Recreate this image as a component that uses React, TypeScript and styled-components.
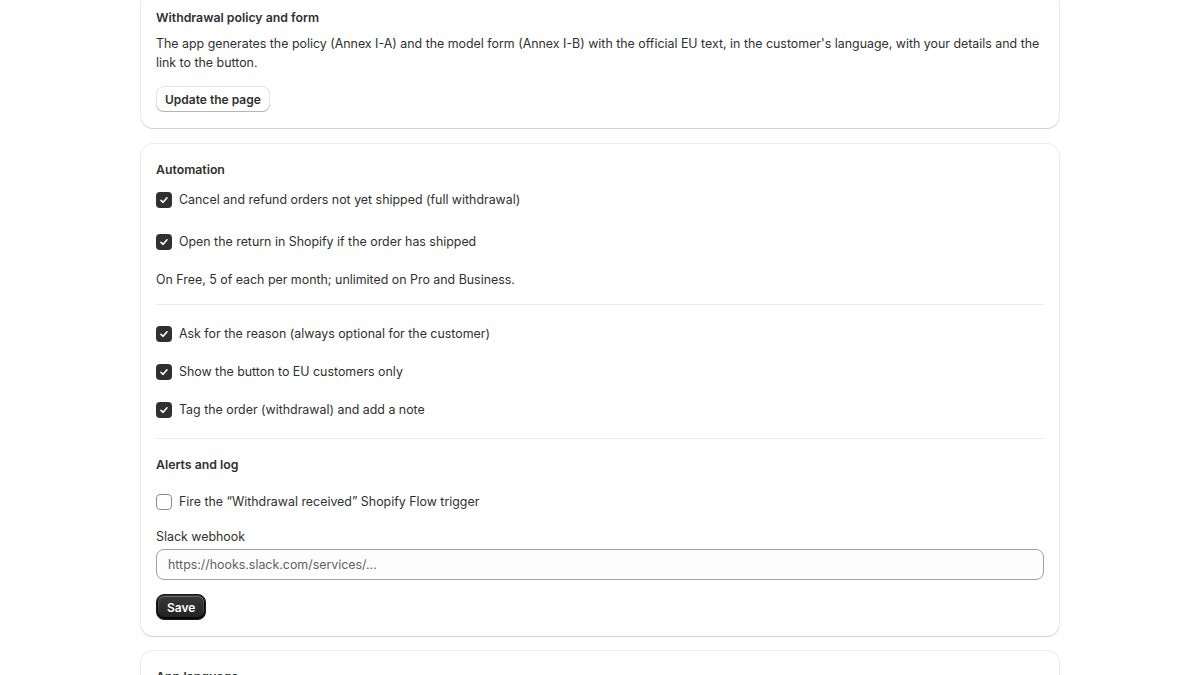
import React from "react";
import styled, { createGlobalStyle } from "styled-components";

const GlobalStyle = createGlobalStyle`
  html, body {
    margin: 0;
    padding: 0;
    background: #ffffff;
    font-family: Inter, "Noto Sans", "Liberation Sans", sans-serif;
    color: #303030;
    font-size: 12.4px;
    line-height: 20px;
    -webkit-font-smoothing: antialiased;
  }
  * { box-sizing: border-box; }
`;

const Page = styled.div`
  width: 918px;
  margin: -8px auto 0;
  display: flex;
  flex-direction: column;
  gap: 15px;
  padding-bottom: 40px;
`;

const Card = styled.section<{ $pt?: number }>`
  background: #ffffff;
  border-radius: 12px;
  padding: 16px 15px;
  margin-top: ${({ $pt }) => $pt || 0}px;
  box-shadow: 0 0 0 1px rgba(0, 0, 0, 0.07), 0 1px 0 0 rgba(0, 0, 0, 0.08),
    0 1px 2px 0 rgba(0, 0, 0, 0.04);
  display: flex;
  flex-direction: column;
`;

const Title = styled.h2<{ $mt?: number }>`
  margin: ${({ $mt }) => $mt || 0}px 0 0;
  font-size: 12.3px;
  line-height: 20px;
  font-weight: 600;
  color: #303030;
`;

const Text = styled.p<{ $mt?: number }>`
  margin: ${({ $mt }) => $mt || 0}px 0 0;
  font-size: 12.4px;
  line-height: 19px;
  font-weight: 400;
  color: #303030;
`;

const Button = styled.button<{ $mt?: number; $primary?: boolean }>`
  align-self: flex-start;
  margin-top: ${({ $mt }) => $mt || 0}px;
  height: 26px;
  padding: 0 ${({ $primary }) => ($primary ? 10 : 9)}px;
  border-radius: 8px;
  font-family: inherit;
  font-size: 12px;
  font-weight: 600;
  cursor: pointer;
  color: ${({ $primary }) => ($primary ? "#ffffff" : "#303030")};
  background: ${({ $primary }) =>
    $primary ? "linear-gradient(180deg, #3a3a3a 0%, #222222 100%)" : "#ffffff"};
  border: ${({ $primary }) => ($primary ? "1px solid #1a1a1a" : "none")};
  box-shadow: ${({ $primary }) =>
    $primary
      ? "0 -1px 0 1px rgba(0,0,0,0.8) inset, 0 0 0 1px #303030 inset, 0 0.5px 0 1.5px rgba(255,255,255,0.25) inset"
      : "0 -1px 0 0 #b5b5b5 inset, 0 0 0 1px rgba(0,0,0,0.1) inset, 0 0.5px 0 1.5px #fff inset"};
`;

const CheckRow = styled.label<{ $mt?: number }>`
  display: flex;
  align-items: center;
  gap: 7px;
  margin-top: ${({ $mt }) => $mt || 0}px;
  height: 20px;
  font-size: 12.4px;
  font-weight: 400;
  color: #303030;
  cursor: pointer;
`;

const Box = styled.span<{ $checked: boolean }>`
  width: 16px;
  height: 16px;
  flex: none;
  border-radius: 4px;
  display: flex;
  align-items: center;
  justify-content: center;
  background: ${({ $checked }) => ($checked ? "#303030" : "#ffffff")};
  border: ${({ $checked }) => ($checked ? "none" : "1px solid #8a8a8a")};
`;

const Divider = styled.hr<{ $mt?: number; $mb?: number }>`
  border: none;
  height: 1px;
  background: #ebebeb;
  margin: ${({ $mt }) => $mt || 0}px 0 ${({ $mb }) => $mb || 0}px;
`;

const Field = styled.div<{ $mt?: number }>`
  display: flex;
  flex-direction: column;
  gap: 2px;
  margin-top: ${({ $mt }) => $mt || 0}px;
`;

const FieldLabel = styled.span`
  font-size: 12.4px;
  line-height: 20px;
  font-weight: 400;
  color: #303030;
`;

const Input = styled.input`
  height: 31px;
  width: 100%;
  border: 1px solid #a0a0a0;
  border-radius: 8px;
  background: #fdfdfd;
  padding: 0 11px;
  font-family: inherit;
  font-size: 12.4px;
  color: #303030;
  &::placeholder {
    color: #616161;
  }
`;

const Check = ({ checked, label, mt }: { checked: boolean; label: string; mt?: number }) => (
  <CheckRow $mt={mt}>
    <Box $checked={checked}>
      {checked && (
        <svg width="10" height="10" viewBox="0 0 10 10" fill="none">
          <path d="M2 5.3 4.1 7.3 8 2.8" stroke="#fff" strokeWidth="1.6" strokeLinecap="round" strokeLinejoin="round" />
        </svg>
      )}
    </Box>
    {label}
  </CheckRow>
);

export default function App() {
  return (
    <>
      <GlobalStyle />
      <Page>
        <Card>
          <Title>Withdrawal policy and form</Title>
          <Text $mt={6}>
            The app generates the policy (Annex I-A) and the model form (Annex I-B) with the official EU text, in the
            customer's language, with your details and the link to the button.
          </Text>
          <Button $mt={14}>Update the page</Button>
        </Card>

        <Card $pt={1}>
          <Title>Automation</Title>
          <Check mt={10} checked label="Cancel and refund orders not yet shipped (full withdrawal)" />
          <Check mt={22} checked label="Open the return in Shopify if the order has shipped" />
          <Text $mt={18}>On Free, 5 of each per month; unlimited on Pro and Business.</Text>
          <Divider $mt={15} $mb={19} />
          <Check checked label="Ask for the reason (always optional for the customer)" />
          <Check mt={18} checked label="Show the button to EU customers only" />
          <Check mt={18} checked label="Tag the order (withdrawal) and add a note" />
          <Divider $mt={18} $mb={16} />
          <Title>Alerts and log</Title>
          <Check mt={17} checked={false} label="Fire the “Withdrawal received” Shopify Flow trigger" />
          <Field $mt={15}>
            <FieldLabel>Slack webhook</FieldLabel>
            <Input placeholder="https://hooks.slack.com/services/..." />
          </Field>
          <Button $mt={14} $primary>
            Save
          </Button>
        </Card>

        <Card>
          <Title>App language</Title>
          <Text $mt={8}>Choose the language used in the app interface.</Text>
        </Card>
      </Page>
    </>
  );
}
